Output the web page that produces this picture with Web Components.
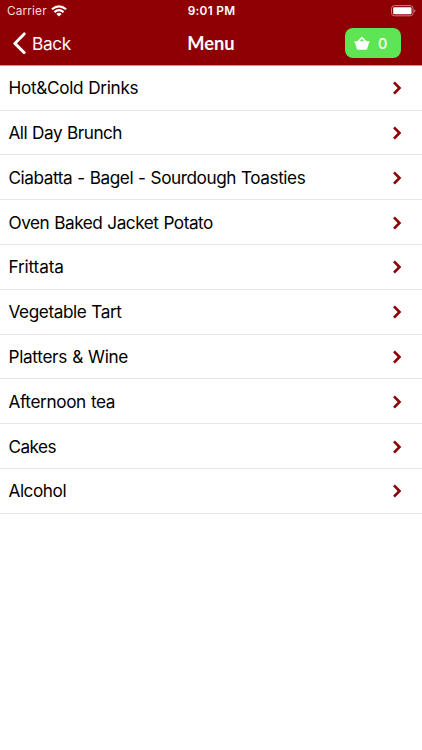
<!DOCTYPE html>
<html lang="en"><head><meta charset="utf-8"><title>Menu</title>
<style>html,body{margin:0;background:#fff}body{font-family:Inter,"Liberation Sans",sans-serif;height:750px;overflow:hidden}</style></head>
<body><menu-page></menu-page>
<script>
const define=(name,html)=>customElements.define(name,class extends HTMLElement{
  constructor(){super();this.attachShadow({mode:'open'}).innerHTML=html;}
});
define('status-bar',`<style>
:host{display:grid;grid-template-columns:1fr auto 1fr;align-items:center;height:21px;padding:0 6px 0 7px;color:#fff;font-size:11.8px;line-height:19px}
.l{display:flex;align-items:center;gap:4px;color:#f6dcdc;letter-spacing:.15px}.l span,.t{padding-top:2px}
.t{font-weight:600;letter-spacing:.3px}.r{display:flex;justify-content:flex-end}svg{display:block}
</style><div class="l"><span>Carrier</span><svg width="16" height="12" viewBox="0 0 16 12" fill="none" stroke="#fff" stroke-width="2.1"><path d="M.9 4.3Q8-1.6 15.1 4.3M3.4 7.1Q8 3.2 12.6 7.1"/><path d="M5.4 8.9Q8 6.8 10.6 8.9L8 11.6Z" fill="#fff" stroke="none"/></svg></div>
<span class="t">9:01 PM</span>
<div class="r"><svg width="25" height="12" viewBox="0 0 25 12"><rect x=".5" y=".6" width="21.6" height="10.2" rx="3" fill="none" stroke="#c87f82"/><rect x="2.2" y="2.2" width="18.3" height="7" rx="1.2" fill="#fff"/><path d="M23.2 4.2q1.2.5 1.2 1.6t-1.2 1.6z" fill="#c87f82"/></svg></div>`);
define('back-button',`<style>:host{display:flex;align-items:center;gap:5px;color:#fff;font-size:17.3px;line-height:24px;letter-spacing:-.35px}svg{display:block}span{padding:1px 0 0 1px}</style>
<svg width="14" height="22" viewBox="0 0 14 22" fill="none" stroke="#fff" stroke-width="2.9" stroke-linecap="round" stroke-linejoin="round"><path d="M12.2 1.9 2.8 11.4l9.4 9.2"/></svg><span><slot></slot></span>`);
define('basket-button',`<style>:host{display:flex;align-items:center;box-sizing:border-box;width:56px;height:30px;border-radius:8px;background:#5fe553;color:#fff;padding-left:9px;gap:8px;font-size:14.5px;font-weight:500;line-height:30px}svg{display:block}span{padding-top:1px}</style>
<svg width="16" height="15" viewBox="0 0 16 15"><path d="M4.1 5.6 7.9 1.6 11.7 5.6" fill="none" stroke="#fff" stroke-width="1.6" stroke-linejoin="round" stroke-linecap="round"/><path d="M.8 5.2H15.2q.7 0 .6.8t-.8.8L13.2 12.7q-.3 1.1-1.4 1.1H4.2q-1.1 0-1.4-1.1L1 6.8Q.3 6.7.2 6t.6-.8z" fill="#fff"/></svg><span><slot></slot></span>`);
define('nav-bar',`<style>:host{display:grid;grid-template-columns:1fr auto 1fr;align-items:center;height:44px;padding:0 21px 0 12px}
h1{margin:0;padding-left:9px;color:#fff;font:700 18.3px/24px Lato,sans-serif}basket-button{justify-self:end}</style>
<back-button>Back</back-button><h1><slot></slot></h1><basket-button>0</basket-button>`);
define('menu-item',`<style>:host{display:flex;align-items:center;justify-content:space-between;box-sizing:border-box;height:44.8px;border-bottom:1px solid #e8e8e8;padding:1px 20px 0 8.5px;color:#000;font-size:17.2px;line-height:24px;word-spacing:.6px;white-space:nowrap}svg{display:block}</style>
<span><slot></slot></span><svg width="10" height="14" viewBox="0 0 10 14" fill="none" stroke="#8e0004" stroke-width="2.6"><path d="m2 1.4 5.5 5.6L2 12.6"/></svg>`);
customElements.define('menu-page',class extends HTMLElement{
  constructor(){super();
    const rows=[['Hot&amp;Cold Drinks',-.33],['All Day Brunch',-.5],['Ciabatta - Bagel - Sourdough Toasties',-.44],['Oven Baked Jacket Potato',-.47],['Frittata',-.16],['Vegetable Tart',-.42],['Platters &amp; Wine',-.31],['Afternoon tea',-.38],['Cakes',-.55],['Alcohol',-.45]];
    this.attachShadow({mode:'open'}).innerHTML=`<style>:host{display:block}header{background:#8e0004;height:65.9px;box-sizing:border-box;border-bottom:1px solid #d68c8e}</style>
<header><status-bar></status-bar><nav-bar>Menu</nav-bar></header><main>${rows.map(([t,s])=>`<menu-item style="letter-spacing:${s}px">${t}</menu-item>`).join('')}</main>`;}
});
</script></body></html>
